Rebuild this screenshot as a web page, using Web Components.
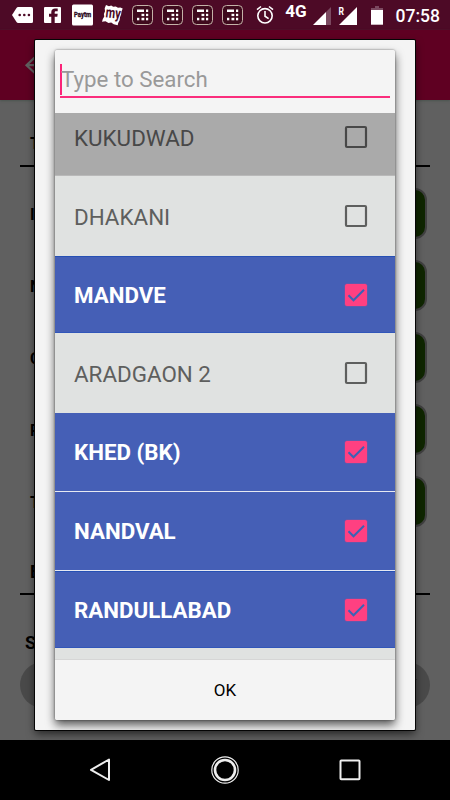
<!DOCTYPE html>
<html lang="en">
<head>
<meta charset="utf-8">
<title>Select villages</title>
<style>
    html, body {
        margin: 0;
        height: 800px;
        overflow: hidden;
        background: #000;
        font-family: Roboto, "Noto Sans", sans-serif;
    }
</style>
</head>
<body>
<phone-screen>
    <status-bar slot="status"></status-bar>
    <form-page slot="page">
        <form-title>T</form-title>
        <form-field>I</form-field>
        <form-field>N</form-field>
        <form-field>C</form-field>
        <form-field>P</form-field>
        <form-field>T</form-field>
        <form-title class="last">E</form-title>
    </form-page>
    <select-dialog slot="dialog" hint="Type to Search" action="OK">
        <village-row style="height:78px;margin-top:-15px" pressed>KUKUDWAD</village-row>
        <village-row style="height:80px">DHAKANI</village-row>
        <village-row style="height:77px" checked>MANDVE</village-row>
        <village-row style="height:80px">ARADGAON 2</village-row>
        <village-row style="height:79px" checked line>KHED (BK)</village-row>
        <village-row style="height:79px" checked line>NANDVAL</village-row>
        <village-row style="height:77px" checked>RANDULLABAD</village-row>
    </select-dialog>
    <nav-bar slot="nav"></nav-bar>
</phone-screen>

<script>
class PhoneScreen extends HTMLElement {
    constructor() {
        super();
        this.attachShadow({ mode: 'open' });
    }

    connectedCallback() {
        this.shadowRoot.innerHTML = `
            <style>
                :host {
                    display: grid;
                    grid-template-rows: 30px 710px 60px;
                    position: relative;
                    width: 450px;
                    height: 800px;
                    overflow: hidden;
                }
                .overlay {
                    position: absolute;
                    left: 35px;
                    top: 40px;
                }
                .nav {
                    position: relative;
                    z-index: 1;
                }
            </style>
            <slot name="status"></slot>
            <slot name="page"></slot>
            <div class="nav"><slot name="nav"></slot></div>
            <div class="overlay"><slot name="dialog"></slot></div>
        `;
    }
}

class StatusBar extends HTMLElement {
    constructor() {
        super();
        this.attachShadow({ mode: 'open' });
    }

    connectedCallback() {
        const calc = `
            <svg width="30" height="30" viewBox="0 0 30 30">
                <rect x="2.500" y="5.500" width="20" height="19" rx="4" fill="#3f0a1d" stroke="#c4b3a8"/>
                <g fill="#fff">
                    <rect x="7" y="9.500" width="7" height="2.500"/><rect x="16" y="9.500" width="2.200" height="2.500"/>
                    <rect x="11.500" y="13.800" width="2.800" height="2.300"/><rect x="16" y="13.800" width="2.200" height="2.300"/>
                    <rect x="7" y="17.800" width="2.300" height="2.500"/><rect x="11.500" y="17.800" width="2.800" height="2.500"/><rect x="16" y="17.800" width="2.200" height="2.500"/>
                </g>
            </svg>`;
        this.shadowRoot.innerHTML = `
            <style>
                :host {
                    display: flex;
                    height: 30px;
                    background: #4d0a26;
                    color: #fff;
                }
                svg {
                    display: block;
                    flex: none;
                }
                text {
                    font-family: Roboto, sans-serif;
                    font-weight: bold;
                }
                .time {
                    font-size: 17.500px;
                    line-height: 32px;
                    font-weight: 500;
                    margin-left: 10.500px;
                    white-space: nowrap;
                }
            </style>
            <svg width="130" height="30" viewBox="0 0 130 30">
                <path d="M12 15l4.500-7q.6-.9 1.700-.9H31.500q1.500 0 1.500 1.500v12.800q0 1.500-1.500 1.500H18.200q-1.100 0-1.700-.9z" fill="#fff"/>
                <g fill="#4d0a26"><circle cx="19.700" cy="15" r="1.300"/><circle cx="24.300" cy="15" r="1.300"/><circle cx="28.900" cy="15" r="1.300"/></g>
                <rect x="44" y="7" width="17" height="16" rx="1" fill="#fff"/>
                <path d="M51.300 23v-6.200H49v-3h2.300v-1.700c0-2.500 1.600-3.700 3.700-3.700h2.700v2.800h-1.600c-1.100 0-1.400.5-1.400 1.300v1.300h3l-.4 3h-2.600V23z" fill="#4d0a26"/>
                <rect x="72" y="4.500" width="21" height="21" rx="1.500" fill="#fff"/>
                <text x="74" y="17" font-size="6.500" fill="#2b0a20" stroke="#2b0a20" stroke-width=".3" textLength="17" lengthAdjust="spacingAndGlyphs">Paytm</text>
                <path d="M106 5l3 1.300 2.200-.7 2 1.200 2.600-.3 2.200 1.200 2.300-.2 2.400 1-1.200 3-.4 3-1.100 2.800-.4 3-1.400 2.600-.5 2.300-4-1-2.500-1.700-2.700.4-3-1.600-3.500.5.800-2.700 1.500-2.500-.4-2.600 1.100-2.800-.3-3z" fill="#fff"/>
                <text x="105.500" y="18" font-size="15" fill="#4d0a26" textLength="15" lengthAdjust="spacingAndGlyphs" transform="rotate(6 113 15)">my</text>
            </svg>
            ${calc.repeat(4)}
            <svg width="135" height="30" viewBox="250 0 135 30">
                <g fill="none" stroke="#fff" stroke-width="1.600">
                    <circle cx="265" cy="15.800" r="7.200"/>
                    <path d="M265 11v5.200l3.600 2.400M257 9.700l4-3.200M273 9.700l-4-3.200"/>
                </g>
                <text x="285.300" y="16.700" font-size="16.500" fill="#fff" textLength="21.500" lengthAdjust="spacingAndGlyphs">4G</text>
                <path d="M326 12v13h-13z" fill="#fff"/>
                <path d="M326 12l5-5v18h-5z" fill="#7b4960"/>
                <text x="338.500" y="15" font-size="10" fill="#fff" textLength="5.500" lengthAdjust="spacingAndGlyphs">R</text>
                <path d="M357 7v18h-18z" fill="#fff"/>
                <path d="M371 10V8h4V6h4v2h4v2z" fill="#7b4960"/>
                <rect x="371" y="10" width="12" height="14.700" fill="#fff"/>
            </svg>
            <span class="time">07:58</span>
        `;
    }
}

// Dimmed page that stays under the dialog
class FormPage extends HTMLElement {
    constructor() {
        super();
        this.attachShadow({ mode: 'open' });
    }

    connectedCallback() {
        this.shadowRoot.innerHTML = `
            <style>
                :host {
                    display: block;
                    background: #606060;
                    color: #000;
                }
                .bar {
                    height: 70px;
                    background: #5f0022;
                    box-shadow: 0 1px 2px #4b5550;
                    padding: 27px 0 0 24px;
                    box-sizing: border-box;
                }
                .label {
                    font-size: 18px;
                    font-weight: bold;
                    line-height: 20px;
                    margin: 38px 0 0 25px;
                }
                .pill {
                    margin: 9px 20px 0;
                    height: 46px;
                    border-radius: 23px;
                    background: #494949;
                    display: flex;
                    justify-content: flex-end;
                }
                .pill svg {
                    margin: 17px 13px 0 0;
                }
                svg { display: block; }
            </style>
            <div class="bar">
                <svg width="20" height="18" viewBox="0 0 20 18" fill="none" stroke="#606060" stroke-width="2.200"><path d="M10.500 .6L2.500 8.200l8 7.600M2.500 8.200h17"/></svg>
            </div>
            <slot></slot>
            <div class="label">S</div>
            <div class="pill"><svg width="10" height="6"><path d="M0 0h10L5 5z" fill="#222"/></svg></div>
        `;
    }
}

class FormTitle extends HTMLElement {
    constructor() {
        super();
        this.attachShadow({ mode: 'open' });
    }

    connectedCallback() {
        this.shadowRoot.innerHTML = `
            <style>
                :host {
                    display: flex;
                    align-items: flex-end;
                    box-sizing: border-box;
                    height: 67px;
                    margin: 0 20px 21px;
                    padding: 0 0 11px 10px;
                    border-bottom: 2px solid #000;
                    font-size: 16px;
                    font-weight: bold;
                    line-height: 20px;
                }
                :host(.last) {
                    margin: 0 20px;
                    height: 47px;
                    padding-bottom: 11px;
                    font-size: 18px;
                }
            </style>
            <slot></slot>
        `;
    }
}

class FormField extends HTMLElement {
    constructor() {
        super();
        this.attachShadow({ mode: 'open' });
    }

    connectedCallback() {
        this.shadowRoot.innerHTML = `
            <style>
                :host {
                    display: flex;
                    justify-content: space-between;
                    align-items: center;
                    height: 51px;
                    padding: 0 23px 0 30px;
                    margin-bottom: 21px;
                    font-size: 16px;
                    font-weight: bold;
                }
                .text {
                    padding-top: 2px;
                }
                .button {
                    box-sizing: border-box;
                    width: 120px;
                    height: 51px;
                    border: 2.500px solid #404040;
                    border-radius: 12px;
                    background: #0f2600;
                }
            </style>
            <span class="text"><slot></slot></span>
            <div class="button"></div>
        `;
    }
}

class SelectDialog extends HTMLElement {
    constructor() {
        super();
        this.attachShadow({ mode: 'open' });
    }

    connectedCallback() {
        this.shadowRoot.innerHTML = `
            <style>
                :host {
                    display: block;
                    box-sizing: border-box;
                    width: 380px;
                    height: 690px;
                    padding: 10px 20px;
                    background: #f4f4f4;
                    border-radius: 1px;
                    box-shadow: 0 0 0 1px #050505, 0 4px 9px rgba(0, 0, 0, .6);
                }
                .card {
                    display: grid;
                    grid-template-rows: 63px 547px 60px;
                    height: 670px;
                    background: #f4f4f4;
                    border-radius: 2px;
                    overflow: hidden;
                }
                .shadow {
                    border-radius: 2px;
                    box-shadow: 0 0 2px rgba(0, 0, 0, .55), 0 5px 10px rgba(0, 0, 0, .65);
                }
                .search {
                    display: flex;
                    align-items: center;
                    box-sizing: border-box;
                    height: 48px;
                    margin: 0 5px;
                    padding-top: 12px;
                    border-bottom: 2px solid #fa2d7c;
                    color: #999;
                    font-size: 22.300px;
                    white-space: nowrap;
                }
                .caret {
                    width: 2px;
                    height: 31px;
                    margin-right: -1px;
                    background: #fb2378;
                }
                .list {
                    overflow: hidden;
                    background: #e0e2e1;
                    box-shadow: inset 0 -1px #d6d6d6;
                }
                .ok {
                    display: flex;
                    align-items: center;
                    justify-content: center;
                    font-size: 17px;
                    color: #000;
                }
            </style>
            <div class="shadow">
                <div class="card">
                    <div><div class="search"><span class="caret"></span>${this.getAttribute('hint')}</div></div>
                    <div class="list"><slot></slot></div>
                    <div class="ok">${this.getAttribute('action')}</div>
                </div>
            </div>
        `;
    }
}

class VillageRow extends HTMLElement {
    constructor() {
        super();
        this.attachShadow({ mode: 'open' });
    }

    connectedCallback() {
        const box = this.hasAttribute('checked')
            ? `<rect x=".5" y=".5" width="23" height="23" rx="2.500" fill="#ff4081" stroke="#3562b6" stroke-width=".6"/>
               <path d="M4.500 12.300l5 5L20 6.800" fill="none" stroke="#3a63b5" stroke-width="2"/>`
            : `<rect x="2" y="2" width="20" height="20" rx="1" fill="none" stroke="currentColor" stroke-width="2.200"/>`;
        this.shadowRoot.innerHTML = `
            <style>
                :host {
                    display: flex;
                    align-items: center;
                    justify-content: space-between;
                    box-sizing: border-box;
                    padding: 0 27px 0 19px;
                    background: #e0e2e1;
                    color: #5e5f5e;
                    font-size: 22.400px;
                    white-space: nowrap;
                }
                :host([pressed]) {
                    background: #aaa;
                    color: #484848;
                    box-shadow: inset 0 -1px #b9b9b9;
                }
                :host(:not([checked])) span {
                    padding-top: 1px;
                }
                :host([checked]) {
                    background: #455fb6;
                    color: #fff;
                    font-weight: bold;
                    font-size: 22.300px;
                    box-shadow: inset 0 1px #2650b4, inset 0 -1px #3156b9;
                }
                :host([line]) {
                    border-bottom: 1px solid #e6e9f2;
                    box-shadow: none;
                }
                svg { display: block; }
            </style>
            <span><slot></slot></span>
            <svg width="24" height="24" viewBox="0 0 24 24">${box}</svg>
        `;
    }
}

class NavBar extends HTMLElement {
    constructor() {
        super();
        this.attachShadow({ mode: 'open' });
    }

    connectedCallback() {
        this.shadowRoot.innerHTML = `
            <style>
                :host {
                    display: flex;
                    align-items: center;
                    justify-content: space-between;
                    box-sizing: border-box;
                    height: 60px;
                    padding: 0 85px;
                    background: #000;
                }
            </style>
            <svg width="30" height="30" viewBox="0 0 30 30"><path d="M24 4.500v20.500L6 14.800z" fill="none" stroke="#eee" stroke-width="2" stroke-linejoin="round"/></svg>
            <svg width="30" height="30" viewBox="0 0 30 30" fill="none" stroke="#eee"><circle cx="15" cy="15" r="10" stroke-width="2.600"/><circle cx="15" cy="15" r="13.200" stroke-width="1.200"/></svg>
            <svg width="30" height="30" viewBox="0 0 30 30"><rect x="5.500" y="5.500" width="19" height="18.800" rx=".8" fill="none" stroke="#eee" stroke-width="2"/></svg>
        `;
    }
}

customElements.define('phone-screen', PhoneScreen);
customElements.define('status-bar', StatusBar);
customElements.define('form-page', FormPage);
customElements.define('form-title', FormTitle);
customElements.define('form-field', FormField);
customElements.define('select-dialog', SelectDialog);
customElements.define('village-row', VillageRow);
customElements.define('nav-bar', NavBar);
</script>
</body>
</html>
